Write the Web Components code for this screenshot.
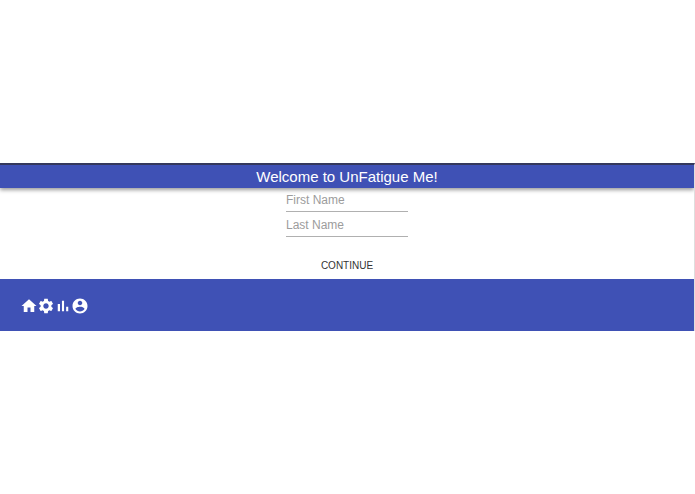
<!DOCTYPE html>
<html lang="en">
<head>
<meta charset="utf-8">
<meta name="viewport" content="width=device-width, initial-scale=1">
<title>UnFatigue Me</title>
<style>
    html {
        --primary: #3f51b5;
        --text: #333;
        --muted: #9c9c9c;
    }

    body {
        margin: 0;
        min-height: 100vh;
        display: grid;
        align-items: center;
        background: #fff;
        color: var(--text);
        font-family: "Liberation Sans", Arial, sans-serif;
    }
</style>
</head>
<body>
<unfatigue-app></unfatigue-app>
<script>
    (function () {
        'use strict';

        customElements.define('app-header', class extends HTMLElement {
            constructor() {
                super();

                let shadowRoot = this.attachShadow({mode: 'open'});
                shadowRoot.innerHTML = `
                <style>
                    :host {
                        display: block;
                        background: var(--primary);
                        color: #fff;
                        box-shadow: 0 2px 4px rgba(0, 0, 0, 0.4);
                    }

                    h1 {
                        margin: 0;
                        font-size: 15px;
                        font-weight: 400;
                        line-height: 23px;
                        text-align: center;
                    }
                </style>
                <h1><slot></slot></h1>
               `;
            }
        });

        customElements.define('text-field', class extends HTMLElement {
            constructor() {
                super();

                let shadowRoot = this.attachShadow({mode: 'open'});
                shadowRoot.innerHTML = `
                <style>
                    :host {
                        display: block;
                    }

                    input {
                        display: block;
                        box-sizing: border-box;
                        width: 100%;
                        height: 24px;
                        margin: 0;
                        padding: 0;
                        border: 0;
                        border-bottom: 1px solid #b0b0b0;
                        border-radius: 0;
                        background: none;
                        color: var(--text);
                        font-family: inherit;
                        font-size: 12px;
                        outline: 0;
                    }

                    input::placeholder {
                        color: var(--muted);
                        opacity: 1;
                    }

                    input:focus {
                        border-bottom-color: var(--primary);
                    }
                </style>
                <input type="text">
               `;
            }

            connectedCallback() {
                const input = this.shadowRoot.querySelector('input');
                const label = this.getAttribute('label');

                input.placeholder = label;
                input.setAttribute('aria-label', label);
                input.name = this.getAttribute('name');
            }
        });

        customElements.define('text-button', class extends HTMLElement {
            constructor() {
                super();

                let shadowRoot = this.attachShadow({mode: 'open'});
                shadowRoot.innerHTML = `
                <style>
                    :host {
                        display: inline-block;
                    }

                    button {
                        display: block;
                        padding: 4px 8px 3px;
                        border: 0;
                        border-radius: 4px;
                        background: none;
                        color: inherit;
                        font-family: inherit;
                        font-size: 10px;
                        line-height: 20px;
                        text-transform: uppercase;
                        cursor: pointer;
                    }

                    button:hover {
                        background: rgba(0, 0, 0, 0.08);
                    }
                </style>
                <button type="button"><slot></slot></button>
               `;
            }
        });

        customElements.define('name-form', class extends HTMLElement {
            constructor() {
                super();

                let shadowRoot = this.attachShadow({mode: 'open'});
                shadowRoot.innerHTML = `
                <style>
                    :host {
                        display: block;
                    }

                    form {
                        display: flex;
                        flex-direction: column;
                        align-items: center;
                        gap: 1px;
                    }

                    text-field {
                        width: 122px;
                    }

                    text-button {
                        margin-top: 14px;
                    }
                </style>
                <form>
                    <text-field label="First Name" name="first"></text-field>
                    <text-field label="Last Name" name="last"></text-field>
                    <text-button>Continue</text-button>
                </form>
               `;
            }
        });

        const icons = {
            home: 'M10 20v-6h4v6h5v-8h3L12 3 2 12h3v8z',
            settings: 'M19.14 12.94c.04-.3.06-.61.06-.94 0-.32-.02-.64-.07-.94l2.03-1.58c.18-.14.23-.41.12-.61l-1.92-3.32c-.12-.22-.37-.29-.59-.22l-2.39.96c-.5-.38-1.03-.7-1.62-.94l-.36-2.54c-.04-.24-.24-.41-.48-.41h-3.84c-.24 0-.43.17-.47.41l-.36 2.54c-.59.24-1.13.57-1.62.94l-2.39-.96c-.22-.08-.47 0-.59.22L2.74 8.87c-.12.21-.08.47.12.61l2.03 1.58c-.05.3-.09.63-.09.94s.02.64.07.94l-2.03 1.58c-.18.14-.23.41-.12.61l1.92 3.32c.12.22.37.29.59.22l2.39-.96c.5.38 1.03.7 1.62.94l.36 2.54c.05.24.24.41.48.41h3.84c.24 0 .44-.17.47-.41l.36-2.54c.59-.24 1.13-.56 1.62-.94l2.39.96c.22.08.47 0 .59-.22l1.92-3.32c.12-.22.07-.47-.12-.61l-2.01-1.58zM12 15.6c-1.98 0-3.6-1.62-3.6-3.6s1.62-3.6 3.6-3.6 3.6 1.62 3.6 3.6-1.62 3.6-3.6 3.6z',
            stats: 'M5 9.2h3V19H5zM10.6 5h2.8v14h-2.8zm5.6 8H19v6h-2.8z',
            account: 'M12 2C6.48 2 2 6.48 2 12s4.48 10 10 10 10-4.48 10-10S17.52 2 12 2zm0 3c1.66 0 3 1.34 3 3s-1.34 3-3 3-3-1.34-3-3 1.34-3 3-3zm0 14.2c-2.5 0-4.71-1.28-6-3.22.03-1.99 4-3.08 6-3.08 1.99 0 5.97 1.09 6 3.08-1.29 1.94-3.5 3.22-6 3.22z'
        };

        customElements.define('nav-link', class extends HTMLElement {
            connectedCallback() {
                if (this.shadowRoot) {
                    return;
                }

                const name = this.getAttribute('icon');
                let shadowRoot = this.attachShadow({mode: 'open'});
                shadowRoot.innerHTML = `
                <style>
                    :host {
                        display: block;
                    }

                    a {
                        display: block;
                        color: inherit;
                    }

                    svg {
                        display: block;
                        width: 18px;
                        height: 18px;
                        fill: currentColor;
                    }
                </style>
                <a href="#${name}" aria-label="${name}">
                    <svg viewBox="0 0 24 24" aria-hidden="true"><path d="${icons[name]}"/></svg>
                </a>
               `;
            }
        });

        customElements.define('app-nav', class extends HTMLElement {
            constructor() {
                super();

                let shadowRoot = this.attachShadow({mode: 'open'});
                shadowRoot.innerHTML = `
                <style>
                    :host {
                        display: block;
                        background: var(--primary);
                        color: #fff;
                    }

                    nav {
                        display: flex;
                        padding: 18px 20px 16px;
                    }

                    nav-link {
                        margin-right: -1px;
                    }
                </style>
                <nav>
                    <nav-link icon="home"></nav-link>
                    <nav-link icon="settings"></nav-link>
                    <nav-link icon="stats"></nav-link>
                    <nav-link icon="account"></nav-link>
                </nav>
               `;
            }
        });

        customElements.define('unfatigue-app', class extends HTMLElement {
            constructor() {
                super();

                let shadowRoot = this.attachShadow({mode: 'open'});
                shadowRoot.innerHTML = `
                <style>
                    :host {
                        display: block;
                        overflow: hidden;
                        border-top: 2px solid #34385c;
                        border-right: 1px solid #dedede;
                    }
                </style>
                <app-header>Welcome to UnFatigue Me!</app-header>
                <name-form></name-form>
                <app-nav></app-nav>
               `;
            }
        });
    })();
</script>
</body>
</html>
